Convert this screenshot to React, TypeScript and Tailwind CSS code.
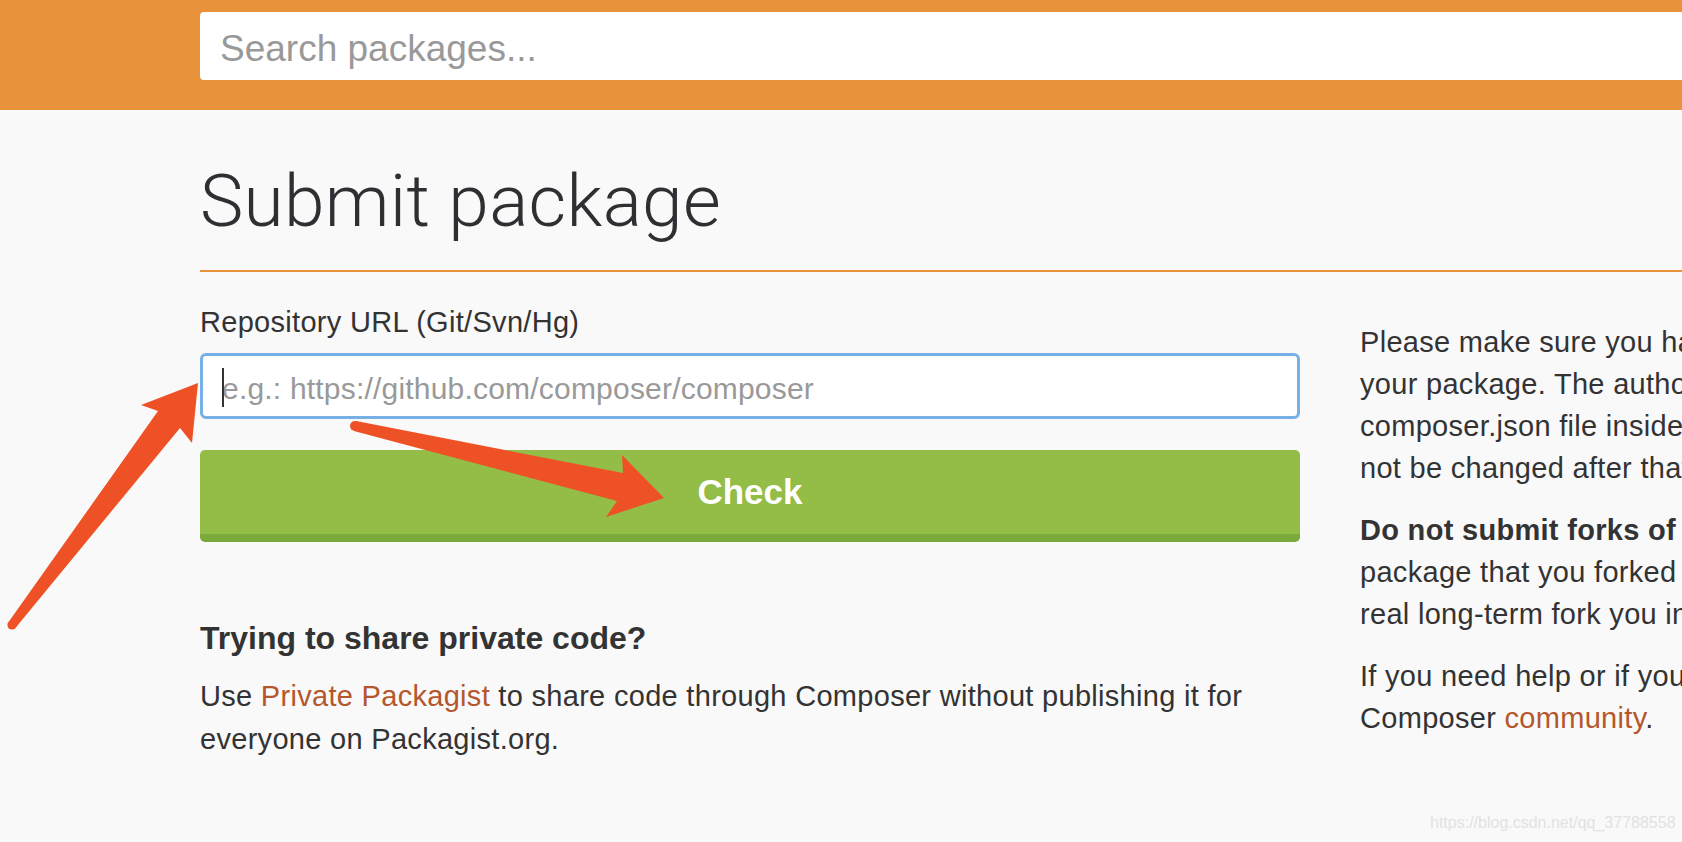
import React from "react";

function Arrows() {
  return (
    <svg
      className="absolute left-0 top-0 pointer-events-none"
      width={1682}
      height={842}
      viewBox="0 0 1682 842"
    >
      <g fill="#ef5126">
        <polygon points="8.4,622.3 158,411 141,405 198,383 192,443 180,428 15.6,627.7" />
        <circle cx="12" cy="625" r="4.6" />
        <polygon points="356.1,421.1 623,473 622,455 664,498 606,517 617,501 353.9,430.9" />
        <circle cx="355" cy="426" r="5" />
      </g>
    </svg>
  );
}

export default function App() {
  return (
    <div className="relative w-[1682px] h-[842px] overflow-hidden bg-[#f9f9f9] font-['Liberation_Sans',Arial,sans-serif] text-[#333]">
      <header className="h-[110px] bg-[#e8923c] pl-[200px] pt-[12px]">
        <div className="h-[68px] w-[1600px] bg-white rounded-[4px] flex items-center pl-[20px] pt-[6px] text-[37px] text-[#999]">
          Search packages...
        </div>
      </header>

      <main className="pl-[200px]">
        <h1 className="mt-[55px] text-[73px] leading-[72px] tracking-[0.3px] font-light font-['Roboto','Liberation_Sans',sans-serif] text-[#2f2f33] whitespace-nowrap">
          Submit package
        </h1>
        <div className="mt-[33px] h-[2px] w-[1600px] bg-[#e8923c]" />

        <div className="flex gap-[60px]">
          <div className="w-[1100px] shrink-0">
            <div className="mt-[29px] text-[29px] leading-[42px] tracking-[0.3px] text-[#333]">
              Repository URL (Git/Svn/Hg)
            </div>
            <div className="relative mt-[10px] h-[66px] border-[3px] border-[#77b0e4] rounded-[6px] bg-white flex items-center pl-[19px] pt-[4px] text-[30px] tracking-[0.2px] text-[#999]">
              <span className="absolute left-[19px] top-[12px] w-[2px] h-[39px] bg-[#333]" />
              e.g.: https://github.com/composer/composer
            </div>
            <div className="mt-[31px] h-[92px] bg-[#93bd47] border-b-[8px] border-[#7aaa3c] rounded-[5px] flex items-center justify-center text-white font-bold text-[35px]">
              Check
            </div>
            <h3 className="mt-[76px] text-[32px] leading-[40px] font-bold text-[#333]">
              Trying to share private code?
            </h3>
            <p className="mt-[17px] text-[29px] leading-[43px] tracking-[0.3px] text-[#333] whitespace-nowrap">
              Use <span className="text-[#b4572c]">Private Packagist</span> to share code through Composer without publishing it for
              <br />
              everyone on Packagist.org.
            </p>
          </div>

          <div className="shrink-0 pt-[49px] whitespace-nowrap text-[29px] leading-[42px] tracking-[0.3px] text-[#333]">
            <div className="mb-[20px]">
              <div>Please make sure you have read the package naming conventions before submitting</div>
              <div>your package. The authoritative name of your package will be taken from the</div>
              <div>composer.json file inside the master branch or trunk of your repository, and it can</div>
              <div>not be changed after that.</div>
            </div>
            <div className="mb-[20px]">
              <div>
                <span className="font-bold">Do not submit forks of existing packages.</span> If you need to test changes to a
              </div>
              <div>package that you forked to patch, use VCS Repositories instead. If however it is a</div>
              <div>real long-term fork you intend on maintaining feel free to submit it.</div>
            </div>
            <div>
              <div>If you need help or if you have any questions please get in touch with the</div>
              <div>
                Composer <span className="text-[#b4572c]">community</span>.
              </div>
            </div>
          </div>
        </div>
      </main>

      <Arrows />

      <div className="absolute left-[1430px] top-[815px] text-[16px] leading-[16px] text-[#e2e2e2] whitespace-nowrap">
        https://blog.csdn.net/qq_37788558
      </div>
    </div>
  );
}
